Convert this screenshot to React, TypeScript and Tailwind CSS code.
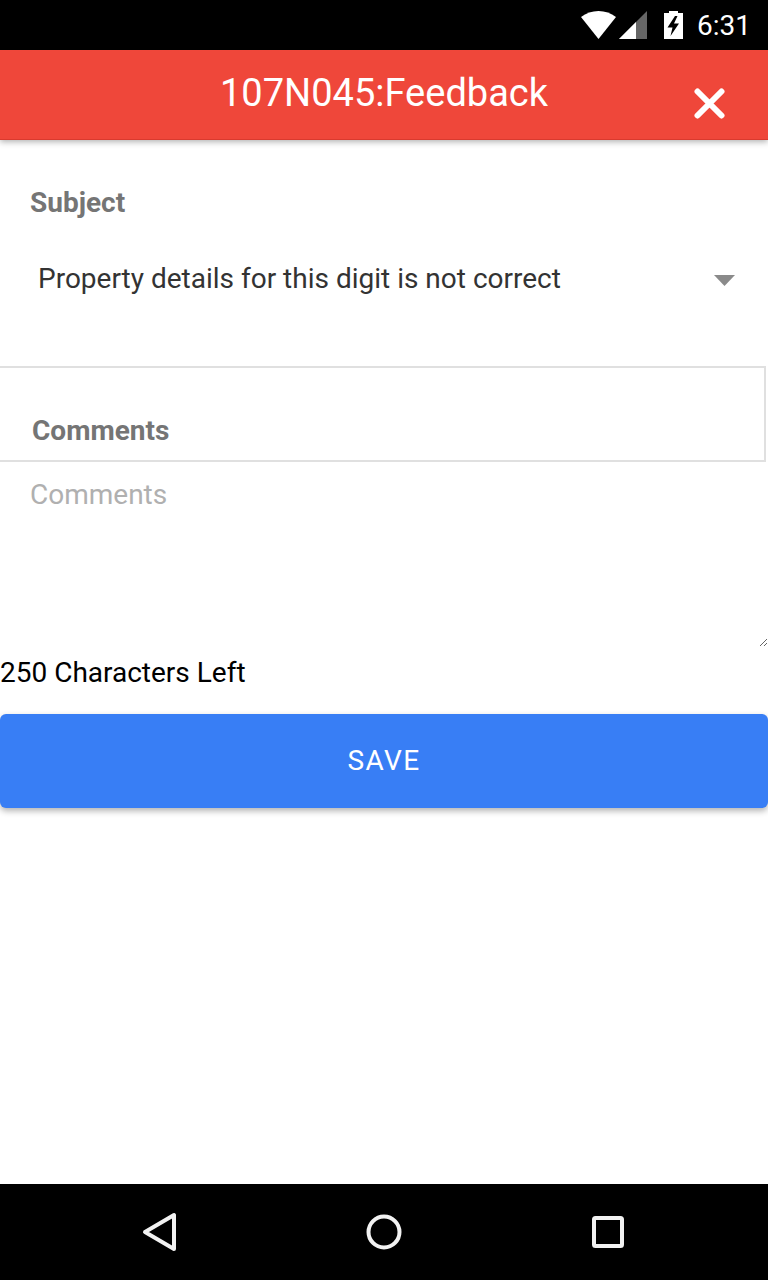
const App = () => {
  return (
    <div className="w-[768px] h-[1280px] flex flex-col bg-white overflow-hidden font-['Roboto',sans-serif]">
      {/* status bar */}
      <div className="h-[50px] bg-black flex items-start justify-end text-white pt-[11px]">
        <svg width="35" height="28" viewBox="0 0 35 28">
          <path d="M17.5 28 L0 6 C5 2 11 0 17.5 0 C24 0 30 2 35 6 Z" fill="#fff" />
        </svg>
        <svg width="28" height="28" viewBox="0 0 28 28" className="ml-[3px]">
          <path d="M0 28 L28 0 L28 28 Z" fill="#666" />
          <path d="M0 28 L17 11 L17 28 Z" fill="#fff" />
        </svg>
        <svg width="19" height="28" viewBox="0 0 19 28" className="ml-[17px]">
          <path d="M5 0 H14 V2 H19 V28 H0 V2 H5 Z" fill="#fff" />
          <path d="M11 5 L3.5 16.5 H8.5 L6.5 25 L15 12.5 H10 L13.5 5 Z" fill="#000" />
        </svg>
        <span className="ml-[14px] mr-[17px] mt-[1px] text-[28px] leading-[28px]">6:31</span>
      </div>

      {/* header */}
      <div className="relative h-[90px] bg-[#ef473a] border-b border-[#d93a2e] shadow-[0_2px_6px_rgba(0,0,0,0.3)] flex justify-center z-10">
        <span className="mt-[20px] text-[38px] leading-[46px] text-white">107N045:Feedback</span>
        <svg width="31" height="31" viewBox="0 0 31 31" className="absolute left-[694px] top-[38px]">
          <path d="M3.5 3.5 L27.5 27.5 M27.5 3.5 L3.5 27.5" stroke="#fff" strokeWidth="6" strokeLinecap="round" />
        </svg>
      </div>

      {/* subject */}
      <div className="pl-[30px] pt-[47px] text-[28px] leading-[32px] font-bold text-[#757575]">Subject</div>
      <div className="flex items-center justify-between pl-[38px] pr-[33px] mt-[44px] h-[32px]">
        <span className="text-[28px] leading-[32px] text-[#333]">Property details for this digit is not correct</span>
        <svg width="21" height="11" viewBox="0 0 21 11" className="mt-[3px]">
          <path d="M0 0 H21 L10.5 11 Z" fill="#8a8a8a" />
        </svg>
      </div>

      {/* comments */}
      <div className="mt-[71px] w-[766px] h-[96px] border-y-2 border-r-2 border-[#e0e0e0] pl-[32px] pt-[47px]">
        <div className="text-[28px] leading-[32px] font-bold text-[#757575]">Comments</div>
      </div>
      <textarea
        placeholder="Comments"
        className="block w-full h-[185px] px-[30px] pt-[16px] pb-[14px] text-[28px] leading-[34px] placeholder:text-[#b0b0b0] outline-none"
      />
      <div className="text-[28px] leading-[32px] text-black mt-[10px]">250 Characters Left</div>

      <button className="mt-[25px] h-[94px] w-full shrink-0 rounded-[6px] bg-[#387ef5] text-white text-[28px] tracking-[1.4px] shadow-[0_3px_6px_rgba(0,0,0,0.3)]">
        SAVE
      </button>

      <div className="flex-1" />

      {/* nav bar */}
      <div className="relative h-[96px] bg-black">
        <svg width="36" height="40" viewBox="0 0 36 40" className="absolute left-[141px] top-[28px]">
          <path d="M4 20 L33 3 V37 Z" fill="none" stroke="#f2f2f2" strokeWidth="4" strokeLinejoin="round" />
        </svg>
        <svg width="36" height="36" viewBox="0 0 36 36" className="absolute left-[366px] top-[30px]">
          <circle cx="18" cy="18" r="15.5" fill="none" stroke="#f2f2f2" strokeWidth="4" />
        </svg>
        <svg width="32" height="32" viewBox="0 0 32 32" className="absolute left-[592px] top-[32px]">
          <rect x="2" y="2" width="28" height="28" rx="1.5" fill="none" stroke="#f2f2f2" strokeWidth="4" />
        </svg>
      </div>
    </div>
  );
};

export default App;
